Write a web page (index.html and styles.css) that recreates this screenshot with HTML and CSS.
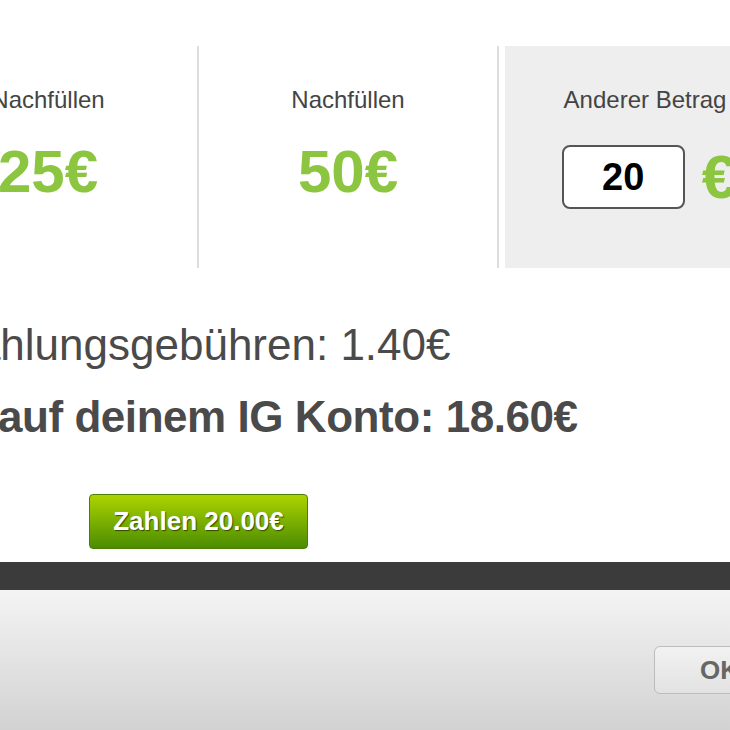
FILE: index.html
```html
<!DOCTYPE html>
<html>
<head>
   <meta charset="utf-8" />
   <title>Guthaben aufladen</title>
   <link rel="stylesheet" href="styles.css">
</head>
<body>
   <div class="page">
      <div class="options">
         <div class="option">
            <div class="label">Nachfüllen</div>
            <div class="amount">25€</div>
         </div>
         <div class="option">
            <div class="label">Nachfüllen</div>
            <div class="amount">50€</div>
         </div>
         <div class="option custom">
            <div class="label">Anderer Betrag</div>
            <div class="custom-row">
               <div class="amount-input">20</div>
               <div class="amount">€</div>
            </div>
         </div>
      </div>

      <p class="fee">Zahlungsgebühren: 1.40€</p>
      <p class="total">auf deinem IG Konto: 18.60€</p>

      <button class="pay" type="submit">Zahlen 20.00€</button>
   </div>

   <div class="bar"></div>
   <footer class="footer">
      <button class="ok" type="button">OK</button>
   </footer>
</body>
</html>
```

FILE: styles.css
```css
html, body { margin: 0; height: 730px; overflow: hidden; }

body { font-family: "Liberation Sans", Arial, sans-serif; background: #fff; color: #444; width: 730px; }

.page { height: 562px; }

.options { display: flex; margin-left: -101px; padding-top: 46px; }

.option { width: 298px; height: 222px; border-right: 2px solid #ddd; display: flex; flex-direction: column; align-items: center; flex-shrink: 0; }

.option.custom { width: 280px; margin-left: 6px; border-right: none; background: #eeeeee; }

.label { font-size: 24px; line-height: 28px; margin-top: 40px; color: #444; }

.amount { font-size: 60px; line-height: 70px; font-weight: bold; color: #8cc540; margin-top: 23px; }

.custom-row { display: flex; align-items: center; gap: 17px; margin-top: 28px; margin-left: 8px; }

.custom-row .amount { margin-top: 0; font-size: 62px; }

.amount-input { width: 123px; height: 64px; box-sizing: border-box; border: 2px solid #555; border-radius: 8px; background: #fff; color: #000; font-size: 38px; font-weight: bold; display: flex; align-items: center; justify-content: center; }

.fee, .total { font-size: 44px; line-height: 72px; margin: 0; white-space: nowrap; color: #4a4a4a; }

.fee { margin-top: 41px; margin-left: -51px; }

.total { font-weight: bold; margin-left: -2px; letter-spacing: -0.45px; }

.pay { display: block; margin: 41px 0 0 89px; width: 219px; height: 55px; padding: 0; border: 1px solid #4c7d05; border-radius: 4px; background: linear-gradient(#add400, #4b8c00); color: #fff; font-family: "Liberation Sans", Arial, sans-serif; font-size: 26px; font-weight: bold; text-shadow: 1px 1px 1px rgba(0, 0, 0, 0.55); cursor: pointer; }

.bar { height: 28px; background: #3b3b3b; }

.footer { height: 140px; box-sizing: border-box; padding: 56px 0 0 654px; background: linear-gradient(#f4f4f4, #d2d2d2); }

.ok { width: 130px; height: 48px; padding: 0 0 0 45px; text-align: left; border: 1px solid #bcbcbc; border-radius: 6px; background: linear-gradient(#f2f2f2, #e2e2e2); color: #666; font-family: "Liberation Sans", Arial, sans-serif; font-size: 26px; font-weight: bold; }
```
